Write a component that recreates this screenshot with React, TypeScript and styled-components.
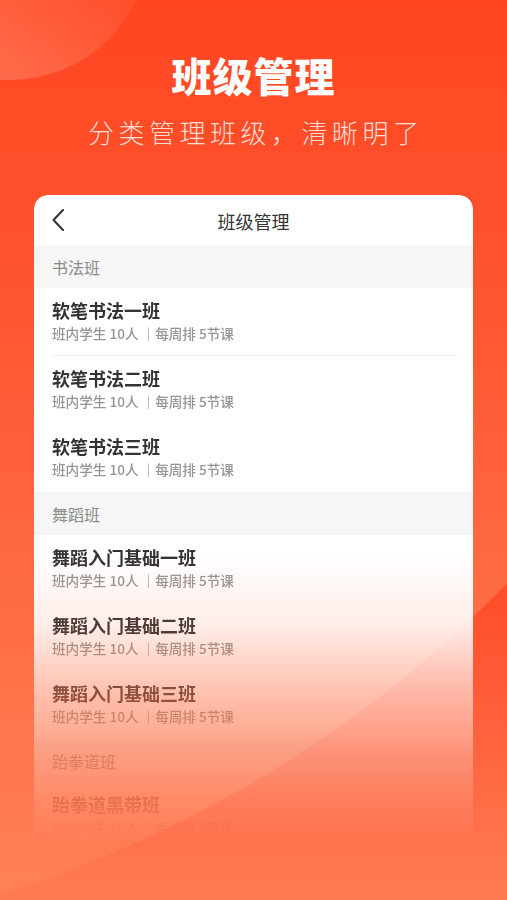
import React from "react";
import styled, { createGlobalStyle } from "styled-components";

const Global = createGlobalStyle`
  html, body { margin: 0; padding: 0; }
  body { font-family: "Noto Sans CJK SC", "Noto Sans", sans-serif; }
  * { box-sizing: border-box; }
`;

const Page = styled.div`
  position: relative;
  width: 507px;
  height: 900px;
  overflow: hidden;
  background: linear-gradient(180deg, #ff4a24 0px, #ff4c28 580px, #ff7b54 900px);
`;

const InsideLayer = styled.div`
  position: absolute;
  inset: 0;
  clip-path: circle(1206px at -357px -258px);
  background: linear-gradient(180deg, #ff4621 0px, #ff5530 300px, #ff6b42 580px, #ff8058 900px);
`;

const TopBlob = styled.div`
  position: absolute;
  left: -130px;
  top: -200px;
  width: 280px;
  height: 280px;
  border-radius: 50%;
  background: linear-gradient(to bottom left, rgba(255, 255, 255, 0.03) 35%, rgba(255, 220, 200, 0.34) 100%);
`;

const Content = styled.div`
  position: relative;
  z-index: 1;
  display: flex;
  flex-direction: column;
  align-items: center;
  padding-top: 51px;
`;

const Title = styled.h1`
  margin: 0;
  font-size: 40px;
  line-height: 48px;
  font-weight: 900;
  color: #fff;
  letter-spacing: 1px;
`;

const Subtitle = styled.p`
  margin: 15px 0 0;
  padding-left: 4.5px;
  font-size: 26px;
  line-height: 36px;
  font-weight: 300;
  color: rgba(255, 255, 255, 0.82);
  letter-spacing: 4.5px;
`;

const Card = styled.div`
  margin-top: 45px;
  width: 439px;
  background: #fff;
  border-radius: 14px 14px 0 0;
  overflow: hidden;
  -webkit-mask-image: linear-gradient(180deg, #000 0px, #000 360px, rgba(0,0,0,0.88) 430px, rgba(0,0,0,0.55) 500px, rgba(0,0,0,0.12) 605px, rgba(0,0,0,0) 650px);
  mask-image: linear-gradient(180deg, #000 0px, #000 360px, rgba(0,0,0,0.88) 430px, rgba(0,0,0,0.55) 500px, rgba(0,0,0,0.12) 605px, rgba(0,0,0,0) 650px);
`;

const Header = styled.div`
  display: grid;
  grid-template-columns: 1fr auto 1fr;
  align-items: center;
  height: 50px;
  padding: 0 18px;
`;

const BackIcon = styled.svg`
  width: 12px;
  height: 22px;
  display: block;
`;

const HeaderTitle = styled.div`
  font-size: 18px;
  line-height: 24px;
  color: #333;
  margin-top: 2px;
`;

const SectionHeader = styled.div`
  height: 43px;
  display: flex;
  align-items: center;
  padding-left: 18px;
  background: #f6f6f6;
  font-size: 16px;
  color: #8a8a8a;
`;

const Item = styled.div<{ $divider: boolean }>`
  position: relative;
  height: 68px;
  padding: 11px 16px 0 18px;
  display: flex;
  flex-direction: column;
  &::after {
    content: "";
    display: ${(p) => (p.$divider ? "block" : "none")};
    position: absolute;
    left: 18px;
    right: 16px;
    bottom: 0;
    height: 1px;
    background: #f0f0f0;
  }
`;

const ItemTitle = styled.div`
  font-size: 18px;
  line-height: 22px;
  font-weight: 700;
  color: #333;
`;

const ItemMeta = styled.div`
  margin-top: 2px;
  font-size: 13.6px;
  line-height: 20px;
  font-weight: 500;
  color: #959595;
  white-space: pre;
`;

const sections = [
  { name: "书法班", items: ["软笔书法一班", "软笔书法二班", "软笔书法三班"] },
  { name: "舞蹈班", items: ["舞蹈入门基础一班", "舞蹈入门基础二班", "舞蹈入门基础三班"] },
  { name: "跆拳道班", items: ["跆拳道黑带班"] },
];

export default function App() {
  return (
    <>
      <Global />
      <Page>
        <InsideLayer />
        <TopBlob />
        <Content>
          <Title>班级管理</Title>
          <Subtitle>分类管理班级，清晰明了</Subtitle>
          <Card>
            <Header>
              <BackIcon viewBox="0 0 12 22" fill="none">
                <path d="M11 1 L1.5 11 L11 21" stroke="#333" strokeWidth="2" strokeLinecap="round" strokeLinejoin="round" />
              </BackIcon>
              <HeaderTitle>班级管理</HeaderTitle>
              <span />
            </Header>
            {sections.map((s, si) => (
              <React.Fragment key={s.name}>
                <SectionHeader>{s.name}</SectionHeader>
                {s.items.map((it, i) => (
                  <Item key={it} $divider={si === 0 && i === 0}>
                    <ItemTitle>{it}</ItemTitle>
                    <ItemMeta>班内学生 10人 ｜每周排 5节课</ItemMeta>
                  </Item>
                ))}
              </React.Fragment>
            ))}
          </Card>
        </Content>
      </Page>
    </>
  );
}
